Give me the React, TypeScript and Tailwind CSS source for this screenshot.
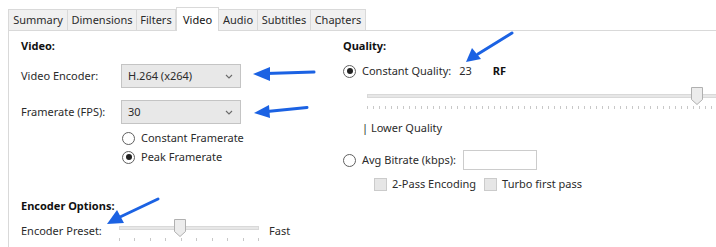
import React from "react";

const TABS = [
  { label: "Summary", w: "w-[60px]" },
  { label: "Dimensions", w: "w-[69px]" },
  { label: "Filters", w: "w-[39px]" },
  { label: "Video", w: "w-[43px]", active: true },
  { label: "Audio", w: "w-[39px]" },
  { label: "Subtitles", w: "w-[53px]" },
  { label: "Chapters", w: "w-[55px]" },
];

function Chevron() {
  return (
    <svg width="8" height="5" viewBox="0 0 8 5" fill="none" aria-hidden>
      <path d="M1 1l3 3 3-3" stroke="#6b6b6b" strokeWidth="1.1" />
    </svg>
  );
}

function Select({ value }: { value: string }) {
  return (
    <div className="flex items-center justify-between w-[120px] h-[24px] pl-[6px] pr-[7px] bg-[#e8e8e8] border border-[#c4c4c4]">
      <span>{value}</span>
      <Chevron />
    </div>
  );
}

function Radio({ checked }: { checked?: boolean }) {
  return (
    <span className="flex items-center justify-center w-[13px] h-[13px] rounded-full border border-[#5f5f5f] bg-white shrink-0">
      {checked && <span className="w-[6px] h-[6px] rounded-full bg-[#222]" />}
    </span>
  );
}

function Check() {
  return <span className="block w-[13px] h-[13px] bg-[#e6e6e6] border border-[#cbcbcb] shrink-0" />;
}

function Thumb() {
  return (
    <svg width="12" height="18" viewBox="0 0 12 18" aria-hidden>
      <path d="M0.5 0.5h11v12l-5.5 5-5.5-5z" fill="#ececec" stroke="#b0b0b0" />
    </svg>
  );
}

// ── Slider: track, thumb (over track) and tick row ─────────────────

function Slider({ width, ticks, thumbLeft }: { width: string; ticks: number; thumbLeft: string }) {
  return (
    <div className={`relative shrink-0 ${width} h-[24px]`}>
      <div className="absolute left-0 right-0 top-[7px] h-[4px] bg-[#e7e7e7] border border-[#d9d9d9]" />
      <div className={`absolute top-0 ${thumbLeft}`}>
        <Thumb />
      </div>
      <div className="absolute left-0 right-0 top-[19px] flex justify-between">
        {Array.from({ length: ticks }).map((_, i) => (
          <span key={i} className="w-px h-[3px] bg-[#c8c8c8]" />
        ))}
      </div>
    </div>
  );
}

function Arrows() {
  const c = "#1b62e3";
  return (
    <svg className="absolute inset-0 pointer-events-none" width="716" height="247" aria-hidden>
      <g stroke={c} strokeLinecap="round">
        <line x1="314" y1="72" x2="266" y2="73.5" strokeWidth="3" />
        <line x1="307" y1="107.5" x2="267" y2="111.5" strokeWidth="3" />
        <line x1="158" y1="199" x2="120" y2="217" strokeWidth="3" />
        <line x1="512" y1="33" x2="478" y2="54" strokeWidth="3" />
      </g>
      <g fill={c}>
        <polygon points="253,74 270,67 270,81" />
        <polygon points="254,113 269,105 270,118" />
        <polygon points="107,224 117,210 124,223" />
        <polygon points="466,62 472,48 481,59" />
      </g>
    </svg>
  );
}

export default function App() {
  return (
    <div
      className="relative w-[716px] h-[247px] overflow-hidden bg-white text-[11px] text-[#2b2b2b] leading-[16px]"
      style={{ fontFamily: '"Noto Sans", "Segoe UI", sans-serif' }}
    >
      {/* Tab strip */}
      <div className="flex items-end ml-[8px] h-[30px]">
        {TABS.map((t) =>
          t.active ? (
            <div
              key={t.label}
              className={`${t.w} h-[24px] -mb-px z-10 flex items-center justify-center bg-white border border-b-0 border-[#d9d9d9] text-[#111]`}
            >
              {t.label}
            </div>
          ) : (
            <div
              key={t.label}
              className={`${t.w} h-[21px] flex items-center justify-center bg-[#f0f0f0] border border-b-0 border-l-0 first:border-l border-[#d9d9d9]`}
            >
              {t.label}
            </div>
          )
        )}
      </div>

      {/* Panel */}
      <div className="ml-[8px] border-l border-t border-[#d9d9d9] h-[217px] flex">
        {/* Left column */}
        <div className="w-[334px] shrink-0 pl-[12px] flex flex-col">
          <div className="mt-[7px] font-bold text-[#111]">Video:</div>
          <div className="mt-[10px] flex items-center">
            <span className="w-[100px]">Video Encoder:</span>
            <Select value="H.264 (x264)" />
          </div>
          <div className="mt-[12px] flex items-center">
            <span className="w-[100px]">Framerate (FPS):</span>
            <Select value="30" />
          </div>
          <div className="mt-[5px] ml-[101px] h-[18px] flex items-center gap-[6px]">
            <Radio />
            <span>Constant Framerate</span>
          </div>
          <div className="mt-[1px] ml-[101px] h-[18px] flex items-center gap-[6px]">
            <Radio checked />
            <span>Peak Framerate</span>
          </div>
          <div className="mt-[32px] font-bold text-[#111]">Encoder Options:</div>
          <div className="mt-[5px] flex items-center">
            <span className="w-[98px]">Encoder Preset:</span>
            <Slider width="w-[140px]" ticks={10} thumbLeft="left-[55px]" />
            <span className="ml-[10px]">Fast</span>
          </div>
        </div>

        {/* Right column */}
        <div className="flex-1 min-w-0 flex flex-col">
          <div className="mt-[7px] font-bold text-[#111]">Quality:</div>
          <div className="mt-[8px] h-[18px] flex items-center">
            <Radio checked />
            <span className="ml-[6px]">Constant Quality:</span>
            <span className="ml-[8px]">23</span>
            <span className="ml-[21px] font-bold text-[#111]">RF</span>
          </div>
          <div className="mt-[7px] ml-[24px]">
            <Slider width="w-[400px]" ticks={67} thumbLeft="left-[324px]" />
          </div>
          <div className="mt-[9px] ml-[19px]">| Lower Quality</div>
          <div className="mt-[14px] h-[20px] flex items-center">
            <Radio />
            <span className="ml-[6px]">Avg Bitrate (kbps):</span>
            <span className="ml-[7px] w-[74px] h-[20px] bg-white border border-[#cccccc]" />
          </div>
          <div className="mt-[7px] ml-[31px] h-[14px] flex items-center">
            <Check />
            <span className="ml-[5px]">2-Pass Encoding</span>
            <span className="ml-[8px]">
              <Check />
            </span>
            <span className="ml-[5px]">Turbo first pass</span>
          </div>
        </div>
      </div>

      <Arrows />
    </div>
  );
}
